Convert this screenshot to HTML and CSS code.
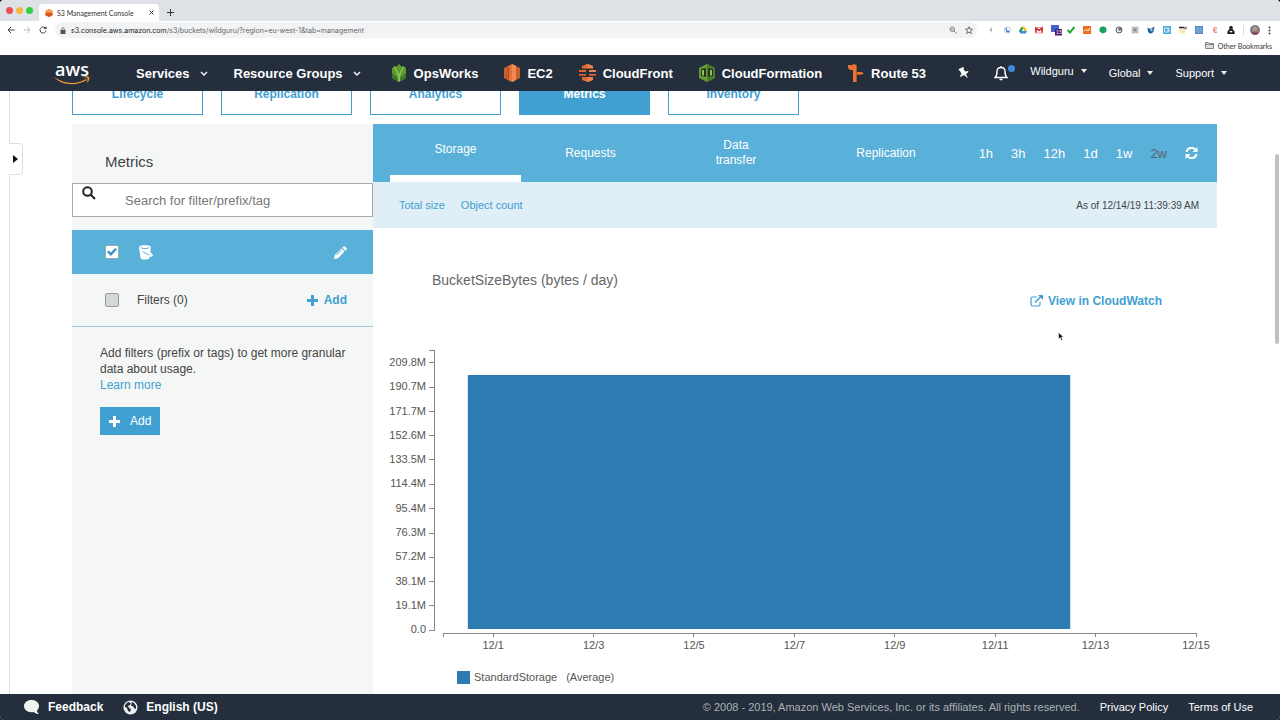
FILE: index.html
```html
<!DOCTYPE html>
<html lang="en">
<head>
<meta charset="utf-8">
<title>S3 Management Console</title>
<link rel="stylesheet" href="styles.css">
</head>
<body>
<div class="window">
  <header class="browser">
    <div class="tabstrip">
      <span class="light red"></span><span class="light yellow"></span><span class="light green"></span>
      <div class="browser-tab">
        <svg class="favicon" viewBox="0 0 16 16"><path fill="#f58536" d="M8 0l7 3.500v9L8 16l-7-3.500v-9z"/><path fill="#d9541e" d="M1 8h14v4.500L8 16l-7-3.500z"/><path fill="#f7a15c" d="M8 0l7 3.500L8 7 1 3.500z"/></svg>
        <span class="tab-title">S3 Management Console</span>
        <button class="plain tab-close" aria-label="Close tab"><svg width="5" height="5" viewBox="0 0 5 5"><path d="M.5.5l4 4m0-4l-4 4" stroke="#333" fill="none"/></svg></button>
      </div>
      <button class="plain new-tab" aria-label="New tab"><svg width="7" height="7" viewBox="0 0 7 7"><path d="M3.500 0v7M0 3.500h7" stroke="#333" fill="none"/></svg></button>
    </div>
    <div class="toolbar">
      <button class="plain" aria-label="Back"><svg width="8" height="8" viewBox="0 0 16 16" fill="none" stroke="#444" stroke-width="2"><path d="M15 8H2m6-6L2 8l6 6"/></svg></button>
      <button class="plain" aria-label="Forward"><svg width="8" height="8" viewBox="0 0 16 16" fill="none" stroke="#bbb" stroke-width="2"><path d="M1 8h13M8 2l6 6-6 6"/></svg></button>
      <button class="plain" aria-label="Reload"><svg width="8" height="8" viewBox="0 0 16 16" fill="none" stroke="#444" stroke-width="2"><path d="M14 9a6 6 0 1 1-2-5.500"/><path d="M15 0v6H9z" fill="#444" stroke="none"/></svg></button>
      <div class="address">
        <svg width="6" height="7" viewBox="0 0 12 14"><path fill="#555" d="M1 6h10v8H1z"/><path d="M3.500 6V4a2.500 2.500 0 0 1 5 0v2" stroke="#555" stroke-width="1.500" fill="none"/></svg>
        <span class="url"><b>s3.console.aws.amazon.com</b>/s3/buckets/wildguru/?region=eu-west-1&amp;tab=management</span>
        <svg width="8" height="8" viewBox="0 0 16 16" fill="none" stroke="#555" stroke-width="1.500"><circle cx="6.500" cy="6.500" r="4.500"/><path d="M10 10l5 5M4 6.500h5"/></svg>
        <svg width="8" height="8" viewBox="0 0 16 16" fill="none" stroke="#444" stroke-width="1.500"><path d="M8 1.500l2 4.500 5 .5-3.800 3.200L12.500 15 8 12.200 3.500 15l1.300-5.300L1 6.500 6 6z"/></svg>
      </div>
      <div class="extensions">
        <svg viewBox="0 0 16 16"><path fill="#999" d="M9 2L5 9h3l-2 6 5-8H8l2-5z"/></svg>
        <svg viewBox="0 0 16 16"><circle cx="9" cy="8" r="6.500" fill="#eef3fb" stroke="#9fb4d8"/><path fill="#3569b8" d="M6 3l2 2-1 2 2 3 2-1 2 2-2 2C7 13 4 8 6 3z"/></svg>
        <svg viewBox="0 0 16 16"><path fill="#fbbc05" d="M5.500 1h5L16 10h-5z"/><path fill="#0f9d58" d="M5.500 1L0 10l2.500 5L8 5.500z"/><path fill="#4285f4" d="M5 10h11l-2.500 5h-11z"/></svg>
        <svg viewBox="0 0 16 16"><path fill="#fff" stroke="#d33" d="M1 3h14v11H1z"/><path d="M2 13V4l6 5 6-5v9" fill="none" stroke="#c22" stroke-width="3"/></svg>
        <svg class="badge-icon" viewBox="0 0 24 22"><path fill="#3f63c8" d="M0 0h16v14H0z"/><path fill="#4a1772" d="M8 8h14v13H8z"/><text x="10" y="18" fill="#fff" font-size="10">15</text></svg>
        <svg viewBox="0 0 16 16"><path d="M1 8l5 5L15 2" fill="none" stroke="#27a737" stroke-width="4"/></svg>
        <svg viewBox="0 0 16 16"><path fill="#ee6c1a" d="M0 0h16v16H0z"/><path d="M2 11l4-4 4 3 4-6" fill="none" stroke="#fff" stroke-width="2"/></svg>
        <svg viewBox="0 0 16 16"><path fill="#16a45c" d="M8 1a6.500 6.500 0 0 1 1 13l-2 2v-2A6.500 6.500 0 0 1 8 1z"/></svg>
        <svg viewBox="0 0 16 16"><circle cx="8" cy="8" r="6" fill="#eee" stroke="#555" stroke-width="2"/><circle cx="9.500" cy="6.500" r="3" fill="#667"/></svg>
        <svg viewBox="0 0 16 16"><path fill="#ccc" stroke="#999" d="M2 2h12v12H2z"/><path fill="#888" d="M5 5h6v6H5z"/></svg>
        <svg viewBox="0 0 16 16"><path fill="#1d5f92" d="M1 3l6 3 8-5-2 10c-3 5-9 5-11 0z"/><circle cx="9" cy="8" r="2.500" fill="#7ed0f0"/></svg>
        <svg viewBox="0 0 16 16"><path fill="#4fa9dc" d="M0 0h16v16H0z"/><path d="M3 4h7v8H3zM12 3v10" fill="none" stroke="#fff" stroke-width="1.500"/></svg>
        <svg viewBox="0 0 16 16"><path fill="#f5e6bd" d="M1 5h11v10H1z"/><path d="M0 3h10" stroke="#222" stroke-width="3"/><circle cx="13" cy="4" r="2" fill="none" stroke="#333" stroke-width="1.500"/></svg>
        <svg viewBox="0 0 16 16"><path fill="#2c73b8" d="M0 0h16v16H0z"/><path d="M0 4h16M0 8h16M0 12h16M4 0v16M8 0v16M12 0v16" stroke="#c4e0f6"/></svg>
        <svg viewBox="0 0 16 16"><path d="M12 4c-3-2-7 0-7 4s4 6 7 4M5 8h6" fill="none" stroke="#e98b85" stroke-width="2.500"/></svg>
        <svg viewBox="0 0 16 16"><path fill="#111" d="M8 0c4 0 4 4 3 6l4 5v5H1v-5l4-5C4 4 4 0 8 0z"/><path fill="#fff" d="M6 4h1v1H6zM9 4h1v1H9zM4 12l4-3 4 3-4 1z"/></svg>
      </div>
      <span class="profile"><svg width="10" height="10" viewBox="0 0 20 20"><circle cx="10" cy="10" r="10" fill="#75808a"/><ellipse cx="10" cy="9" rx="4.500" ry="6" fill="#c98f80"/><path fill="#8e4d56" d="M3 16c3-4 11-4 14 0-3 5-11 5-14 0z"/></svg></span>
      <button class="plain" aria-label="Browser menu"><svg width="3" height="9" viewBox="0 0 3 9" fill="#444"><circle cx="1.500" cy="1.500" r="1"/><circle cx="1.500" cy="4.500" r="1"/><circle cx="1.500" cy="7.500" r="1"/></svg></button>
    </div>
    <div class="bookmarks">
      <svg width="9" height="7" viewBox="0 0 18 14"><path d="M1 13V1h6l2 2h8v10zM1 5h16" fill="#ddd" stroke="#666" stroke-width="1.500"/></svg>
      <span>Other Bookmarks</span>
    </div>
  </header>

  <nav class="navbar">
    <a class="logo" href="#" aria-label="aws">
      <span class="logo-word">aws</span>
      <svg class="logo-smile" width="36" height="9" viewBox="0 0 36 9"><path d="M0 1c10 7 22 8 32 2l1 1C23 10 8 10 0 1z" fill="#f29a35"/><path d="M28 1c3-1 6-1 7 0s0 4-2 6c0-2 1-3 .5-4.500S30 1.800 28 1z" fill="#f29a35"/></svg>
    </a>
    <div class="menus">
      <button class="plain menu">Services<svg width="8" height="5" viewBox="0 0 8 5"><path d="M1 1l3 3 3-3" fill="none" stroke="#eee" stroke-width="1.500"/></svg></button>
      <button class="plain menu">Resource Groups<svg width="8" height="5" viewBox="0 0 8 5"><path d="M1 1l3 3 3-3" fill="none" stroke="#eee" stroke-width="1.500"/></svg></button>
    </div>
    <div class="shortcuts">
      <a href="#"><svg width="16" height="18" viewBox="0 0 16 18"><path fill="#5b9b31" d="M1 4l3-2 1 1 3-3 3 3 1-1 3 2v10l-7 4-7-4z"/><path fill="#8abf50" d="M4 2l4 8 4-8 1 1-4 9v5l-1 1-1-1v-5L3 3z"/><path fill="#3d7724" d="M1 9l6 5v3l-6-3zM15 9l-6 5v3l6-3z"/></svg>OpsWorks</a>
      <a href="#"><svg width="16" height="18" viewBox="0 0 16 18"><path fill="#c85f28" d="M0 4l4-2v14l-4-2zM16 4l-4-2v14l4-2z"/><path fill="#e4713a" d="M4 2l4-2 4 2v14l-4 2-4-2z"/><path fill="#f08a50" d="M8 0l4 2v14l-4 2z"/><path stroke="#a94a1c" d="M4.500 3v12" fill="none"/></svg>EC2</a>
      <a href="#"><svg width="17" height="18" viewBox="0 0 17 18"><path fill="#dd6931" d="M3 2l5-2 1 0 5 2v3H3zM0 6h7v2H0zM10 6h7v2h-7zM0 10h7v2H0zM10 10h7v2h-7zM3 13h11v3l-5 2H8l-5-2z"/><path fill="#f4a06e" d="M8.500 0L14 2v3H8.500zM10 6h7v2h-7zM8.500 13H14v3l-5.500 2z" opacity=".5"/><path fill="#b14e20" d="M3 4h11v1H3zM0 11h7v1H0zM10 11h7v1h-7z"/></svg>CloudFront</a>
      <a href="#"><svg width="16" height="18" viewBox="0 0 16 18"><path fill="#679c38" d="M0 4l8-4 8 4v10l-8 4-8-4z"/><path fill="#4a7d2a" d="M8 0l8 4v10l-8 4z"/><path fill="#26331f" d="M2 5l5-1v9l-5-1zM9 4l5 1v7l-5 1z"/><path fill="#8fc25a" d="M3 6h2v6l-2-1zM11 6h2v5l-2 1z"/></svg>CloudFormation</a>
      <a href="#"><svg width="16" height="18" viewBox="0 0 16 18"><path fill="#e8743a" d="M0 1h5V0l4 1v17H5V6H2L0 4z"/><path fill="#b9501c" d="M8 1h1v17H8zM9 9h5v2H9z"/><path fill="#e8743a" d="M9 8h5l2 2H9z"/></svg>Route 53</a>
    </div>
    <div class="account">
      <button class="plain pin" aria-label="Edit shortcuts"><svg width="12" height="12" viewBox="0 0 12 12"><path fill="#fff" d="M2 2l4-2 1 1-.5 1.500 2 2 2.500-.5.5 1-2.500 2 2 4.500-4-3.500-3.500 2L3 9l1.500-2-1.500-3L1.500 3z"/></svg></button>
      <button class="plain bell" aria-label="Notifications"><svg width="14" height="16" viewBox="0 0 14 16" fill="none" stroke="#fff" stroke-width="1.400"><path d="M7 1v1M1 12.500h12c-2-1.500-2-3.500-2-6C11 4 9.500 2.500 7 2.500S3 4 3 6.500c0 2.500 0 4.500-2 6zM5.500 14.500h3"/></svg><span class="dot"></span></button>
      <button class="plain drop raised">Wildguru<span class="caret"></span></button>
      <button class="plain drop">Global<span class="caret"></span></button>
      <button class="plain drop">Support<span class="caret"></span></button>
    </div>
  </nav>

  <div class="body">
    <aside class="rail"><button class="plain rail-toggle" aria-label="Expand navigation"><svg width="5" height="8" viewBox="0 0 5 8"><path d="M0 0l5 4-5 4z" fill="#111"/></svg></button></aside>
    <main class="page">
      <div class="modes">
        <button>Lifecycle</button>
        <button>Replication</button>
        <button>Analytics</button>
        <button class="active">Metrics</button>
        <button>Inventory</button>
      </div>
      <div class="panel">
        <section class="sidebar">
          <h2>Metrics</h2>
          <label class="search">
            <svg width="14" height="14" viewBox="0 0 14 14" fill="none" stroke="#222" stroke-width="2"><circle cx="5.500" cy="5.500" r="4.300"/><path d="M8.800 8.800l4.200 4.200"/></svg>
            <input type="text" placeholder="Search for filter/prefix/tag" aria-label="Search for filter/prefix/tag">
          </label>
          <div class="row bucket">
            <input class="tick" type="checkbox" checked aria-label="Bucket">
            <svg width="14" height="15" viewBox="0 0 14 15"><path fill="#fff" d="M0 2c0-2.500 12-2.500 12 0l-1.500 11c-1 2-8 2-9 0z"/><path fill="none" stroke="#59b0d8" d="M1.500 2.500c2 1.500 7 1.500 9 0M4 6.500l6.500 4"/><path fill="none" stroke="#fff" stroke-width="1.500" d="M10 10.500c2 1 3.500.5 3-.5L11 7.500"/></svg>
            <button class="plain end" aria-label="Edit"><svg width="13" height="13" viewBox="0 0 13 13"><path fill="#fff" d="M0 13l.8-4L7.500 2.500l3 3L4 12.200zM8.300 1.700L9.500.5q.7-.7 1.400 0l1.600 1.600q.7.700 0 1.400l-1.200 1.200z"/><path d="M2.500 9l5-5" stroke="#59b0d8"/></svg></button>
          </div>
          <div class="row filters">
            <input class="tick" type="checkbox" id="filters">
            <label for="filters">Filters (0)</label>
            <button class="plain end add-link"><svg width="11" height="11" viewBox="0 0 11 11"><path d="M5.500 0v11M0 5.500h11" stroke="currentColor" stroke-width="3"/></svg>Add</button>
          </div>
          <div class="hint">
            <p>Add filters (prefix or tags) to get more granular data about usage.</p>
            <a href="#">Learn more</a>
            <button class="add-button"><svg width="11" height="11" viewBox="0 0 11 11"><path d="M5.500 0v11M0 5.500h11" stroke="currentColor" stroke-width="3"/></svg>Add</button>
          </div>
        </section>
        <section class="content">
          <div class="topbar">
            <div class="tabs">
              <button class="plain active">Storage</button>
              <button class="plain">Requests</button>
              <button class="plain">Data<br>transfer</button>
              <button class="plain">Replication</button>
            </div>
            <div class="ranges">
              <button class="plain">1h</button><button class="plain">3h</button><button class="plain">12h</button><button class="plain">1d</button><button class="plain">1w</button><button class="plain current">2w</button>
              <button class="plain" aria-label="Refresh"><svg width="13" height="12" viewBox="0 0 13 12" fill="none" stroke="#fff" stroke-width="2"><path d="M1.500 5A5 5 0 0 1 10.500 3M11.500 7A5 5 0 0 1 2.500 9"/><path d="M12.500 0v5H7.500zM.5 12V7h5z" fill="#fff" stroke="none"/></svg></button>
            </div>
          </div>
          <div class="subbar">
            <a href="#">Total size</a><a href="#">Object count</a>
            <span class="as-of">As of 12/14/19 11:39:39 AM</span>
          </div>
          <h3>BucketSizeBytes (bytes / day)</h3>
          <a class="watch" href="#"><svg width="13" height="12" viewBox="0 0 13 12"><path d="M7 2H2.500Q1 2 1 3.500v6Q1 11 2.500 11h6Q10 11 10 9.500V7" fill="none" stroke="#419fd2" stroke-width="1.200"/><path d="M5 7.500l6-6" stroke="#419fd2" stroke-width="1.600"/><path d="M8 0h5v5z" fill="#419fd2"/></svg>View in CloudWatch</a>
          <figure class="chart">
            <svg class="y-axis">
              <path d="M56 1h5v280h-5M56 13h5M56 38h5M56 62h5M56 86h5M56 110h5M56 135h5M56 159h5M56 184h5M56 208h5M56 232h5M56 256h5" class="line"/>
              <g text-anchor="end">
                <text x="53" y="17">209.8M</text><text x="53" y="41">190.7M</text><text x="53" y="66">171.7M</text><text x="53" y="90">152.6M</text><text x="53" y="114">133.5M</text><text x="53" y="138">114.4M</text><text x="53" y="163">95.4M</text><text x="53" y="187">76.3M</text><text x="53" y="211">57.2M</text><text x="53" y="236">38.1M</text><text x="53" y="260">19.1M</text><text x="53" y="284">0.0</text>
              </g>
            </svg>
            <svg class="plot">
              <rect x="3.300%" y="26" width="80%" height="254" fill="#2e7bb1"/>
              <g class="line">
                <line x1="0" x2="100%" y1="284" y2="284"/>
                <line x1="0" x2="0" y1="284" y2="288"/>
                <line x1="6.667%" x2="6.667%" y1="284" y2="288"/><line x1="20%" x2="20%" y1="284" y2="288"/><line x1="33.333%" x2="33.333%" y1="284" y2="288"/><line x1="46.667%" x2="46.667%" y1="284" y2="288"/><line x1="60%" x2="60%" y1="284" y2="288"/><line x1="73.333%" x2="73.333%" y1="284" y2="288"/><line x1="86.667%" x2="86.667%" y1="284" y2="288"/><line x1="100%" x2="100%" y1="284" y2="288"/>
              </g>
              <g text-anchor="middle">
                <text x="6.667%" y="300">12/1</text><text x="20%" y="300">12/3</text><text x="33.333%" y="300">12/5</text><text x="46.667%" y="300">12/7</text><text x="60%" y="300">12/9</text><text x="73.333%" y="300">12/11</text><text x="86.667%" y="300">12/13</text><text x="100%" y="300">12/15</text>
              </g>
            </svg>
            <figcaption><span class="swatch"></span><span>StandardStorage</span><span class="stat">(Average)</span></figcaption>
          </figure>
        </section>
      </div>
    </main>
    <div class="scroll-thumb"></div>
  </div>

  <footer class="footer">
    <button class="plain"><svg width="16" height="15" viewBox="0 0 16 15"><path fill="#f2f2f2" d="M7.500 0C12 0 15 2.700 15 6c0 2-1 3.500-2 4.500 0 1.500 1 2.500 2 3.500-2 0-4-.5-5-2-6 1-10-2-10-6 0-3.300 3-6 7.500-6z"/></svg>Feedback</button>
    <button class="plain"><svg width="15" height="15" viewBox="0 0 15 15"><circle cx="7.500" cy="7.500" r="7" fill="#eee"/><path fill="#242e3d" d="M2 5l3-3 3 1-1 2-2 1 1 2 2 1-1 3-2-1-1-3-2-1zM9 2l2 1 2 3 0 3-2-1-1-2-2 0z"/></svg>English (US)</button>
    <span class="legal">© 2008 - 2019, Amazon Web Services, Inc. or its affiliates. All rights reserved.</span>
    <a href="#">Privacy Policy</a>
    <a href="#">Terms of Use</a>
  </footer>
  <svg class="cursor" width="6" height="9" viewBox="0 0 12 18"><path d="M1 1v13l3-3 3 6 2-1-2-6h4z" fill="#111" stroke="#fff"/></svg>
</div>
</body>
</html>
```

FILE: styles.css
```css
* { box-sizing: border-box; }
html { background: #111; }
body {
  margin: 0;
  font-family: "Liberation Sans", Arial, sans-serif;
  font-size: 12px;
  color: #444;
}
svg { display: block; flex: none; }
a { text-decoration: none; color: #419fd2; }
button { font: inherit; cursor: pointer; }
.plain {
  display: flex;
  align-items: center;
  padding: 0;
  border: 0;
  background: none;
  color: inherit;
}
.window {
  display: flex;
  flex-direction: column;
  height: 100vh;
  overflow: hidden;
  border-radius: 4px;
  background: #fff;
  position: relative;
}

/* browser chrome */
.browser { font: 7px Lato, sans-serif; color: #333; }
.tabstrip {
  display: flex;
  align-items: center;
  height: 21px;
  padding-left: 6px;
  background: #dee1e6;
}
.light { width: 7px; height: 7px; margin-right: 3px; border-radius: 50%; }
.red { background: #ec4f57; }
.yellow { background: #f6b843; }
.green { background: #35cf45; }
.browser-tab {
  display: flex;
  align-items: center;
  align-self: flex-end;
  height: 17px;
  width: 120px;
  margin: 0 8px 0 3px;
  padding: 0 5px 0 6px;
  border-radius: 4px 4px 0 0;
  background: #fff;
}
.new-tab { padding-top: 4px; }
.favicon { width: 8px; height: 8px; margin-right: 4px; }
.tab-close { margin-left: auto; }
.toolbar {
  display: flex;
  align-items: center;
  gap: 8px;
  height: 18px;
  padding: 0 9px 0 7px;
}
.address {
  display: flex;
  align-items: center;
  flex: 1;
  gap: 8px;
  height: 16px;
  margin-right: 2px;
  padding: 0 4px 0 5px;
  border-radius: 8px;
  background: #f1f3f4;
}
.address .url { flex: 1; margin-left: -3px; font: 7px Inter, sans-serif; color: #666; }
.url b { font-weight: 400; color: #222; }
.extensions { display: flex; align-items: center; gap: 8px; }
.extensions svg { width: 8px; height: 8px; }
.extensions .badge-icon { width: 12px; height: 11px; margin-right: -4px; }
.profile { padding-left: 6px; border-left: 1px solid #ddd; }
.bookmarks {
  display: flex;
  align-items: center;
  justify-content: flex-end;
  gap: 4px;
  height: 16px;
  padding: 0 8px 3px 0;
}

/* console navigation */
.navbar {
  display: flex;
  align-items: center;
  flex: none;
  height: 36px;
  padding: 0 53px 0 54px;
  background: #242e3d;
  color: #fff;
  z-index: 2;
}
.logo { width: 36px; margin-right: 46px; color: #fff; }
.logo-word { display: block; font: 600 18px/14px "Open Sans", sans-serif; text-align: center; }
.menus { display: flex; gap: 26px; margin-right: 30px; font-size: 13px; font-weight: bold; }
.menu { gap: 10px; }
.shortcuts { display: flex; gap: 26px; font-size: 13px; font-weight: bold; }
.shortcuts a { display: flex; align-items: center; gap: 7px; color: #fff; }
.account { display: flex; align-items: center; margin-left: auto; gap: 22px; font-size: 11px; }
.pin { margin-right: 3px; }
.bell { position: relative; }
.dot {
  position: absolute;
  left: 14px;
  top: 0;
  width: 7px;
  height: 7px;
  border-radius: 50%;
  background: #3e8ddd;
}
.drop { gap: 7px; }
.raised { padding-bottom: 4px; }
.caret { border: 3px solid transparent; border-top: 4px solid #eee; border-bottom: 0; }

/* page body */
.body { display: flex; flex: 1; min-height: 0; overflow: hidden; position: relative; }
.rail { flex: none; width: 10px; border-right: 1px solid #ddd; position: relative; }
.rail-toggle {
  position: absolute;
  left: 9px;
  top: 52px;
  justify-content: center;
  width: 14px;
  height: 32px;
  border: 1px solid #ddd;
  border-left: 0;
  border-radius: 0 4px 4px 0;
  background: #fff;
}
.page {
  display: flex;
  flex-direction: column;
  flex: 1;
  min-width: 0;
  padding: 0 63px 0 62px;
}
.modes { display: flex; flex: none; gap: 18px; margin: -18px 0 9px; }
.modes button {
  width: 131px;
  height: 42px;
  padding: 0;
  border: 1px solid #419fd2;
  background: #fff;
  color: #419fd2;
  font-weight: bold;
}
.modes .active { background: #419fd2; color: #fff; }
.panel { display: flex; flex: 1; min-height: 0; }
.sidebar { flex: none; width: 301px; background: #f5f7f7; }
.sidebar h2 {
  height: 59px;
  margin: 0;
  padding: 28px 33px 0;
  font-size: 15px;
  line-height: 20px;
  font-weight: normal;
}
.search { display: block; position: relative; }
.search svg { position: absolute; left: 10px; top: 3px; }
.search input {
  display: block;
  width: 100%;
  height: 34px;
  padding: 0 12px 0 52px;
  border: 1px solid #aaa;
  border-radius: 0;
  background: #fff;
  font: 13px "Liberation Sans", Arial, sans-serif;
}
.search input::placeholder { color: #777; }
.row { display: flex; align-items: center; padding: 0 26px 0 33px; }
.bucket { height: 44px; margin-top: 13px; gap: 20px; background: #59b0d8; }
.filters { height: 53px; gap: 18px; border-bottom: 1px solid #9fc8df; }
.end { margin-left: auto; }
.tick {
  appearance: none;
  display: grid;
  place-items: center;
  width: 14px;
  height: 14px;
  margin: 0;
  border: 1px solid #999;
  border-radius: 2px;
  background: #d5d8d8;
}
.tick:checked { background: #fff; border-color: #9aa; }
.tick:checked::before {
  content: "";
  width: 10px;
  height: 9px;
  background: #3191c8;
  clip-path: polygon(0 50%, 18% 32%, 38% 55%, 82% 5%, 100% 22%, 38% 95%);
}
.add-link { gap: 6px; color: #419fd2; font-weight: bold; }
.hint { padding: 18px 20px 18px 28px; line-height: 16px; }
.hint p { margin: 0; }
.add-button {
  display: flex;
  align-items: center;
  gap: 10px;
  height: 28px;
  margin-top: 14px;
  padding: 0 9px;
  border: 0;
  background: #419fd2;
  color: #fff;
}

/* metrics */
.content { flex: 1; min-width: 0; }
.topbar { display: flex; height: 58px; background: #59b0d8; color: #fff; }
.tabs {
  display: grid;
  grid-template-columns: 131fr 139fr 152fr 148fr;
  flex: 1;
  padding-left: 17px;
}
.tabs .plain { justify-content: center; text-align: center; line-height: 15px; }
.tabs .active { border-bottom: 7px solid #fff; }
.ranges {
  display: flex;
  align-items: center;
  justify-content: flex-end;
  gap: 18px;
  width: 257px;
  padding-right: 19px;
  font-size: 13px;
}
.current { color: #57656d; }
.subbar {
  display: flex;
  align-items: center;
  gap: 16px;
  height: 46px;
  padding: 0 18px 0 26px;
  background: #dfeef7;
  font-size: 11px;
}
.as-of { margin-left: auto; font-size: 10px; }
.content h3 {
  margin: 44px 59px 0;
  color: #666;
  font-size: 14px;
  line-height: 16px;
  font-weight: normal;
}
.watch {
  display: flex;
  align-items: center;
  justify-content: flex-end;
  gap: 5px;
  margin: 5px 55px 0;
  line-height: 16px;
  font-weight: bold;
}
.chart {
  display: grid;
  grid-template-columns: 70px 1fr;
  margin: 40px 21px 0 0;
  color: #555;
  font-size: 11px;
}
.chart svg { width: 100%; height: 310px; overflow: visible; fill: #555; }
.chart .line { fill: none; stroke: #888; shape-rendering: crispEdges; }
figcaption {
  display: flex;
  align-items: center;
  grid-column: 1 / -1;
  gap: 4px;
  height: 14px;
  margin-top: 11px;
  padding-left: 84px;
}
.swatch { width: 13px; height: 13px; background: #2e7bb1; }
.stat { margin-left: 5px; }
.scroll-thumb {
  position: absolute;
  right: 1px;
  top: 63px;
  width: 4px;
  height: 190px;
  border-radius: 2px;
  background: #c1c1c1;
}

.footer {
  display: flex;
  align-items: center;
  flex: none;
  gap: 20px;
  height: 26px;
  padding: 0 27px 0 24px;
  background: #242e3d;
  color: #fff;
  font-size: 11px;
}
.footer .plain { gap: 8px; font-size: 12px; font-weight: bold; }
.footer a { color: #fff; }
.legal { margin-left: auto; color: #aab3b5; }
.cursor { position: absolute; left: 1058px; top: 332px; }
```
